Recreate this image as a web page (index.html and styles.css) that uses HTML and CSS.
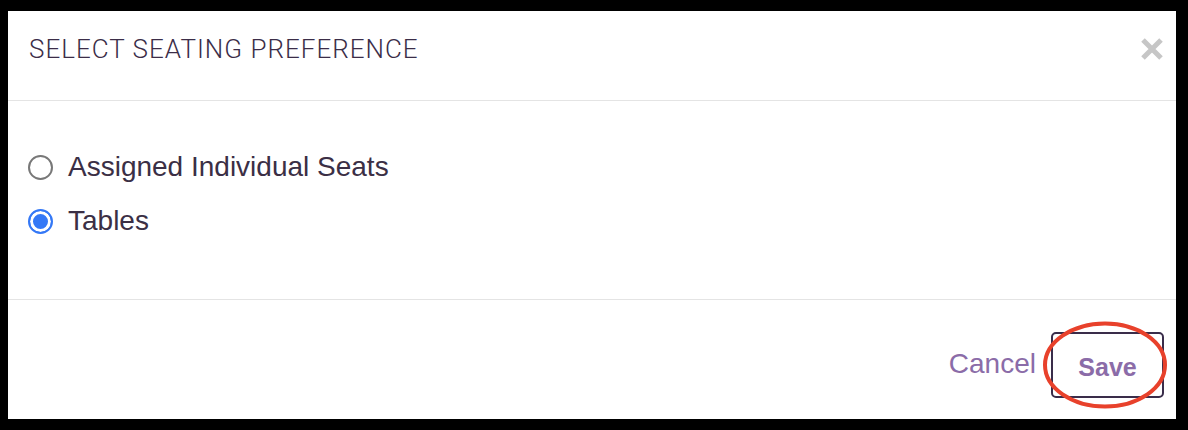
FILE: index.html
```html
<!DOCTYPE html>
<html lang="en">
<head>
  <meta charset="UTF-8">
  <meta name="viewport" content="width=device-width, initial-scale=1.0">
  <title>Select Seating Preference</title>
  <link rel="stylesheet" href="styles.css">
</head>
<body>
  <div class="modal">
    <div class="modal-header">
      <h2 class="modal-title">SELECT SEATING PREFERENCE</h2>
      <button type="button" class="close-btn" aria-label="Close">
        <svg width="24" height="24" viewBox="0 0 24 24">
          <path d="M3 3 L21 21 M21 3 L3 21" stroke="#c6c6c6" stroke-width="5" stroke-linecap="butt"/>
        </svg>
      </button>
    </div>
    <form class="modal-body" id="seatingForm">
      <label class="option">
        <input type="radio" name="seating" value="seats">
        <span>Assigned Individual Seats</span>
      </label>
      <label class="option">
        <input type="radio" name="seating" value="tables" checked>
        <span>Tables</span>
      </label>
    </form>
    <div class="modal-footer">
      <button type="button" class="btn-cancel">Cancel</button>
      <div class="save-wrap">
        <button type="button" class="btn-save">Save</button>
        <svg class="highlight" width="130" height="92" viewBox="0 0 130 92">
          <ellipse cx="65" cy="46" rx="60" ry="41.5" fill="none" stroke="#e8412b" stroke-width="4"/>
        </svg>
      </div>
    </div>
  </div>
</body>
</html>
```

FILE: styles.css
```css
body {
  margin: 0;
  background: #000;
  font-family: Roboto, "Liberation Sans", Arial, sans-serif;
}
.modal {
  margin: 11px 12px 11px 8px;
  height: 408px;
  background: #fff;
  display: flex;
  flex-direction: column;
}
.modal-header {
  height: 89px;
  border-bottom: 1px solid #e4e4e4;
  display: flex;
  justify-content: space-between;
  align-items: flex-start;
  padding: 0 12px 0 21px;
}
.modal-title {
  margin: 23px 0 0;
  font-size: 26px;
  font-weight: 300;
  color: #3b2d48;
  letter-spacing: 1px;
}
.close-btn {
  margin-top: 26px;
  padding: 0;
  border: none;
  background: none;
  cursor: pointer;
}
.modal-body {
  height: 199px;
  border-bottom: 1px solid #e4e4e4;
  padding: 39px 20px 0;
  box-sizing: border-box;
  margin: 0;
}
.option {
  display: flex;
  align-items: center;
  gap: 15px;
  height: 54px;
  font-size: 28px;
  color: #3b2f45;
  font-family: "Liberation Sans", Arial, sans-serif;
}
.option input {
  appearance: none;
  -webkit-appearance: none;
  width: 25px;
  height: 25px;
  margin: 0;
  border: 2px solid #787878;
  border-radius: 50%;
  box-sizing: border-box;
  background: #fff;
}
.option input:checked {
  border: 2.5px solid #3478f6;
  background: #3478f6;
  box-shadow: inset 0 0 0 3px #fff;
}
.modal-footer {
  flex: 1;
  display: flex;
  justify-content: flex-end;
  align-items: flex-start;
  padding: 32px 12px 0 0;
  gap: 15px;
}
.btn-cancel {
  margin-top: 16px;
  border: none;
  background: none;
  padding: 0;
  font-family: "Liberation Sans", Arial, sans-serif;
  font-size: 28px;
  color: #8b6ca8;
  cursor: pointer;
}
.save-wrap {
  position: relative;
}
.btn-save {
  width: 113px;
  height: 66px;
  border: 2px solid #3a2d4a;
  border-radius: 5px;
  background: #fff;
  font-family: "Liberation Sans", Arial, sans-serif;
  font-weight: bold;
  font-size: 25px;
  color: #8b6ca8;
  cursor: pointer;
  padding: 4px 0 0;
}
.highlight {
  position: absolute;
  left: -11px;
  top: -13px;
  pointer-events: none;
}
```
